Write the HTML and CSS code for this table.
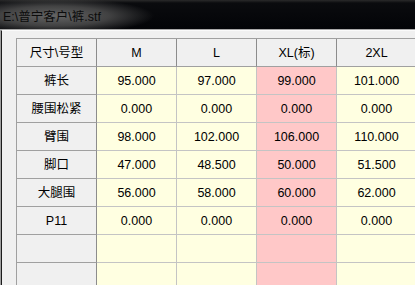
FILE: index.html
```html
<!DOCTYPE html>
<html>
<head>
<meta charset="utf-8">
<link rel="stylesheet" href="styles.css">
</head>
<body>
<div class="window">
  <div class="titlebar"><span class="title">E:\普宁客户\裤.stf</span></div>
  <div class="client">
    <div class="inner">
      <table class="grid">
        <tr class="head">
          <td class="fixed">尺寸\号型</td><td class="fixed">M</td><td class="fixed">L</td><td class="fixed">XL(标)</td><td class="fixed">2XL</td>
        </tr>
        <tr><td class="fixed">裤长</td><td>95.000</td><td>97.000</td><td class="std">99.000</td><td>101.000</td></tr>
        <tr><td class="fixed">腰围松紧</td><td>0.000</td><td>0.000</td><td class="std">0.000</td><td>0.000</td></tr>
        <tr><td class="fixed">臂围</td><td>98.000</td><td>102.000</td><td class="std">106.000</td><td>110.000</td></tr>
        <tr><td class="fixed">脚口</td><td>47.000</td><td>48.500</td><td class="std">50.000</td><td>51.500</td></tr>
        <tr><td class="fixed">大腿围</td><td>56.000</td><td>58.000</td><td class="std">60.000</td><td>62.000</td></tr>
        <tr><td class="fixed">P11</td><td>0.000</td><td>0.000</td><td class="std">0.000</td><td>0.000</td></tr>
        <tr><td class="fixed"></td><td></td><td></td><td class="std"></td><td></td></tr>
        <tr><td class="fixed"></td><td></td><td></td><td class="std"></td><td></td></tr>
      </table>
    </div>
  </div>
</div>
</body>
</html>
```

FILE: styles.css
```css
html, body {
  margin: 0;
  padding: 0;
  width: 415px;
  height: 285px;
  overflow: hidden;
  background: #f0f0f0;
  font-family: "Liberation Sans", "Noto Sans CJK SC", sans-serif;
  font-size: 12.5px;
  color: #000;
}

.window {
  display: flex;
  flex-direction: column;
  height: 285px;
}

.titlebar {
  height: 29px;
  flex: 0 0 29px;
  border-bottom: 1px solid #a8a8a8;
  background:
    radial-gradient(ellipse 100px 18px at 54px 16px, rgba(105,105,105,0.95) 0%, rgba(80,80,80,0.8) 55%, rgba(20,20,20,0) 100%),
    linear-gradient(to bottom, #2a2a2a 0, #0a0b0e 3px, #030407 100%);
  display: flex;
  align-items: center;
  padding-left: 3px;
}

.title {
  font-size: 12.5px;
  color: #0c0c0c;
  white-space: nowrap;
  margin-top: 2px;
}

.client {
  flex: 1;
  border-left: 1px solid #a0a0a0;
}

.inner {
  height: 100%;
  border-left: 1px solid #1c1c1c;
  border-top: 1px solid #fafafa;
  padding: 7px 0 0 14px;
}

.grid {
  border-collapse: separate;
  border-spacing: 0;
  table-layout: fixed;
  width: 401px;
  border-top: 1px solid #a0a0a0;
  border-left: 1px solid #a0a0a0;
}

.grid td {
  width: 79px;
  height: 27px;
  padding: 0;
  text-align: center;
  vertical-align: middle;
  background: #ffffe1;
  border-right: 1px solid #c4c4c4;
  border-bottom: 1px solid #c4c4c4;
  white-space: nowrap;
  line-height: 14px;
}

.grid td.std {
  background: #ffc8c8;
}

.grid td.fixed {
  background: #f0f0f0;
  border-right: 1px solid #a0a0a0;
  border-bottom: 1px solid #a0a0a0;
}

.grid tr td.fixed:first-child {
  border-right: 1px solid #8c8c8c;
}

.head td.fixed {
  border-right: 1px solid #8c8c8c;
  border-bottom: 1px solid #a0a0a0;
}
```
